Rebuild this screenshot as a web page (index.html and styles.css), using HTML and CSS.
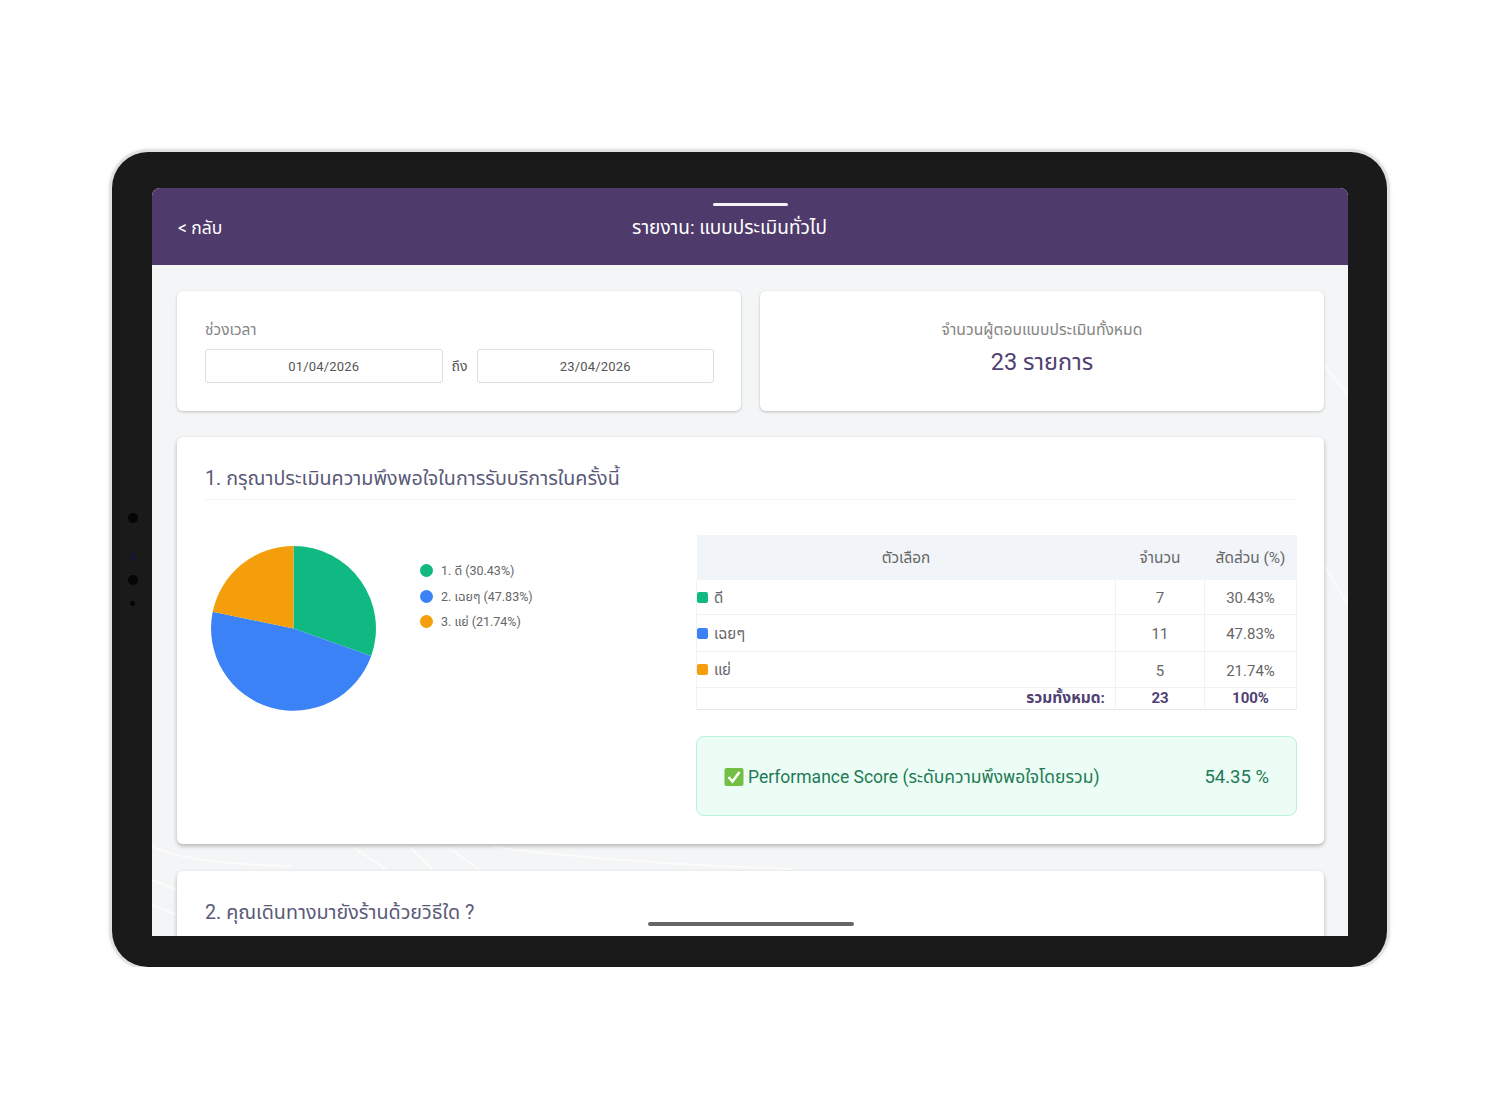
FILE: index.html
```html
<!DOCTYPE html>
<html lang="th">
<head>
    <meta charset="UTF-8">
    <title>รายงาน: แบบประเมินทั่วไป</title>
    <link rel="stylesheet" href="styles.css">
</head>
<body>

<div class="tablet">
    <span class="cam cam-1"></span>
    <span class="cam cam-2"></span>
    <span class="cam cam-3"></span>
    <span class="cam cam-4"></span>

    <div class="screen">
        <div class="notch-bar"></div>
        <div class="header">
            <span class="back">&lt; กลับ</span>
            <span class="title">รายงาน: แบบประเมินทั่วไป</span>
        </div>

        <div class="content">
            <svg class="bg-lines" viewBox="0 0 1196 671" preserveAspectRatio="none" aria-hidden="true">
                <path d="M0 582 C30 595 80 600 140 601 M201 582 L235 605 M258 582 L281 605 M296 582 L328 605 M340 582 C420 592 520 600 640 604" />
                <path d="M0 615 L25 625 M0 640 L25 650 M1172 100 L1196 130 M1172 300 L1196 340" />
            </svg>

            <div class="top-row">
                <div class="card range-card">
                    <div class="range-label">ช่วงเวลา</div>
                    <div class="range-fields">
                        <div class="date-box">01/04/2026</div>
                        <span class="range-to">ถึง</span>
                        <div class="date-box">23/04/2026</div>
                    </div>
                </div>
                <div class="card total-card">
                    <div class="total-label">จำนวนผู้ตอบแบบประเมินทั้งหมด</div>
                    <div class="total-value">23 รายการ</div>
                </div>
            </div>

            <div class="card question-card">
                <div class="question-title">1. กรุณาประเมินความพึงพอใจในการรับบริการในครั้งนี้</div>
                <div class="question-body">
                    <div class="chart-side">
                        <svg class="pie" width="166" height="166" viewBox="0 0 166 166">
                            <path fill="#10b981" d="M82.5 82.5 L82.5 0 A82.5 82.5 0 0 1 160.2 110.1 Z" />
                            <path fill="#3b82f6" d="M82.5 82.5 L160.2 110.1 A82.5 82.5 0 0 1 1.7 65.8 Z" />
                            <path fill="#f59e0b" d="M82.5 82.5 L1.7 65.8 A82.5 82.5 0 0 1 82.5 0 Z" />
                        </svg>
                        <ul class="legend">
                            <li><span class="dot green"></span>1. ดี (30.43%)</li>
                            <li><span class="dot blue"></span>2. เฉยๆ (47.83%)</li>
                            <li><span class="dot orange"></span>3. แย่ (21.74%)</li>
                        </ul>
                    </div>

                    <div class="table-side">
                        <table class="result-table">
                            <thead>
                                <tr>
                                    <th class="col-option">ตัวเลือก</th>
                                    <th class="col-count">จำนวน</th>
                                    <th class="col-share">สัดส่วน (%)</th>
                                </tr>
                            </thead>
                            <tbody>
                                <tr class="row-a">
                                    <td><span class="swatch green"></span>ดี</td>
                                    <td class="num">7</td>
                                    <td class="num">30.43%</td>
                                </tr>
                                <tr class="row-b">
                                    <td><span class="swatch blue"></span>เฉยๆ</td>
                                    <td class="num">11</td>
                                    <td class="num">47.83%</td>
                                </tr>
                                <tr class="row-c">
                                    <td><span class="swatch orange"></span>แย่</td>
                                    <td class="num">5</td>
                                    <td class="num">21.74%</td>
                                </tr>
                            </tbody>
                            <tfoot>
                                <tr>
                                    <td class="sum-label">รวมทั้งหมด:</td>
                                    <td class="num sum">23</td>
                                    <td class="num sum">100%</td>
                                </tr>
                            </tfoot>
                        </table>

                        <div class="score-box">
                            <span class="score-name">
                                <svg class="check" width="20" height="20" viewBox="0 0 20 20">
                                    <rect x="0.5" y="1" width="19" height="18" rx="2" fill="#72bf44" />
                                    <path d="M4.5 10 L8.5 14.5 L15.5 5" fill="none" stroke="#fff" stroke-width="2.6" />
                                </svg>
                                Performance Score (ระดับความพึงพอใจโดยรวม)
                            </span>
                            <span class="score-value">54.35 %</span>
                        </div>
                    </div>
                </div>
            </div>

            <div class="card question-card">
                <div class="question-title next">2. คุณเดินทางมายังร้านด้วยวิธีใด ?</div>
            </div>
        </div>

        <div class="home-bar"></div>
    </div>
</div>

</body>
</html>
```

FILE: styles.css
```css
body {
    font-family: Roboto, "Noto Sans", "Noto Sans Thai", sans-serif;
    background-color: #fff;
    margin: 0;
    padding: 0;
}
.tablet {
    position: relative;
    width: 1275px;
    height: 815px;
    margin: 152px 0 0 112px;
    padding: 36px 39px 31px 40px;
    box-sizing: border-box;
    background-color: #1a1a1a;
    border-radius: 36px;
    box-shadow: 0 0 0 3px #e2e2e2, 0 0 4px 3px #ececec;
}
.cam {
    position: absolute;
    border-radius: 50%;
    background-color: #050505;
}
.cam-1 { left: 16px; top: 361px; width: 10px; height: 10px; }
.cam-2 { left: 17px; top: 401px; width: 8px; height: 8px; background-color: #16162a; }
.cam-3 { left: 16px; top: 423px; width: 10px; height: 10px; }
.cam-4 { left: 18px; top: 449px; width: 5px; height: 5px; }

.screen {
    position: relative;
    height: 748px;
    border-radius: 8px 8px 0 0;
    overflow: hidden;
    background-color: #f4f5f6;
}
.notch-bar {
    position: absolute;
    z-index: 1;
    top: 15px;
    left: 561px;
    width: 75px;
    height: 3px;
    border-radius: 2px;
    background-color: #f4f2f6;
}
.home-bar {
    position: absolute;
    top: 734px;
    left: 496px;
    width: 206px;
    height: 4px;
    border-radius: 2px;
    background-color: #666;
}
.header {
    position: relative;
    height: 77px;
    background-color: #4f3b6b;
    color: #fff;
}
.back {
    position: absolute;
    left: 26px;
    top: 28px;
    font-size: 17.5px;
    line-height: 24px;
}
.title {
    display: block;
    padding-top: 27px;
    padding-right: 41px;
    text-align: center;
    font-size: 19px;
    line-height: 26px;
}
.content {
    position: relative;
    padding: 26px 24px 0 25px;
}
.bg-lines {
    position: absolute;
    left: 0;
    top: 0;
    width: 1196px;
    height: 671px;
}
.bg-lines path {
    fill: none;
    stroke: #fbfbfb;
    stroke-width: 2;
}
.card {
    position: relative;
    background-color: #fff;
    border-radius: 6px;
    box-shadow: 0 1px 3px rgba(0, 0, 0, 0.22);
    box-sizing: border-box;
}
.top-row {
    display: grid;
    grid-template-columns: 564px 564px;
    gap: 19px;
    margin-bottom: 26px;
}
.top-row .card {
    height: 120px;
}
.range-card {
    padding: 28px 27px 0 28px;
}
.range-label {
    font-size: 15.5px;
    line-height: 22px;
    color: #858585;
    margin-bottom: 8px;
}
.range-fields {
    display: flex;
    align-items: center;
}
.date-box {
    flex: 1;
    height: 34px;
    border: 1px solid #dcdfe3;
    border-radius: 3px;
    box-sizing: border-box;
    text-align: center;
    font-size: 13px;
    line-height: 34px;
    letter-spacing: 0.2px;
    color: #555;
}
.range-to {
    width: 34px;
    text-align: center;
    font-size: 14px;
    color: #555;
}
.total-card {
    padding-top: 28px;
    text-align: center;
}
.total-label {
    font-size: 15.7px;
    line-height: 22px;
    color: #858585;
}
.total-value {
    margin-top: 5px;
    font-size: 23.5px;
    line-height: 32px;
    color: #4f4272;
}
.question-card {
    padding: 28px 27px 28px 28px;
    margin-bottom: 27px;
    box-shadow: 0 2px 4px rgba(0, 0, 0, 0.28);
}
.question-title {
    padding-bottom: 6px;
    border-bottom: 1px solid #f3f4f6;
    font-size: 19.7px;
    line-height: 28px;
    color: #5a5a78;
}
.question-title.next {
    border-bottom: none;
}
.question-body {
    display: flex;
    padding-top: 35px;
}
.chart-side {
    position: relative;
    width: 491px;
    flex-shrink: 0;
}
.pie {
    position: absolute;
    left: 6px;
    top: 11px;
}
.legend {
    position: absolute;
    left: 215px;
    top: 23px;
    margin: 0;
    padding: 0;
    list-style: none;
    font-size: 12.5px;
    line-height: 25.5px;
    color: #666;
}
.legend li {
    display: flex;
    align-items: center;
}
.dot {
    width: 13px;
    height: 13px;
    border-radius: 50%;
    margin-right: 8px;
}
.green { background-color: #10b981; }
.blue { background-color: #3b82f6; }
.orange { background-color: #f59e0b; }

.table-side {
    flex: 1;
}
.result-table {
    width: 100%;
    table-layout: fixed;
    border-collapse: collapse;
    font-size: 15px;
    color: #666;
    border-bottom: 1px solid #e5e7eb;
}
.result-table th {
    height: 44px;
    padding: 1px 0 0;
    background-color: #f1f5f9;
    font-weight: 400;
    font-size: 15.4px;
    color: #666;
}
.col-count { width: 89px; }
.col-share { width: 92px; }
.result-table td {
    padding: 2px 0 0;
    border-bottom: 1px solid #f0f1f3;
    border-right: 1px solid #f0f1f3;
}
.result-table td:first-child {
    border-left: 1px solid #f0f1f3;
}
.row-a td { height: 32px; }
.row-b td { height: 34px; }
.row-c td { height: 33px; }
.result-table tfoot td {
    height: 21px;
    padding-top: 0;
    line-height: 21px;
    border-bottom: none;
}
.num {
    text-align: center;
}
.swatch {
    display: inline-block;
    width: 11px;
    height: 11px;
    border-radius: 2px;
    margin-right: 6px;
}
.result-table td.sum-label {
    padding-right: 10px;
    text-align: right;
    font-weight: 700;
    font-size: 15.5px;
    color: #4f4272;
}
.sum {
    font-weight: 700;
    color: #4f4272;
}
.score-box {
    display: flex;
    justify-content: space-between;
    align-items: center;
    height: 80px;
    margin-top: 26px;
    padding: 2px 27px 0;
    box-sizing: border-box;
    background-color: #ecfdf5;
    border: 1px solid #bdf0da;
    border-radius: 8px;
    color: #1f7a56;
}
.score-name {
    display: flex;
    align-items: center;
    font-size: 17.5px;
}
.check {
    margin-right: 4px;
}
.score-value {
    font-size: 18.5px;
}
```
